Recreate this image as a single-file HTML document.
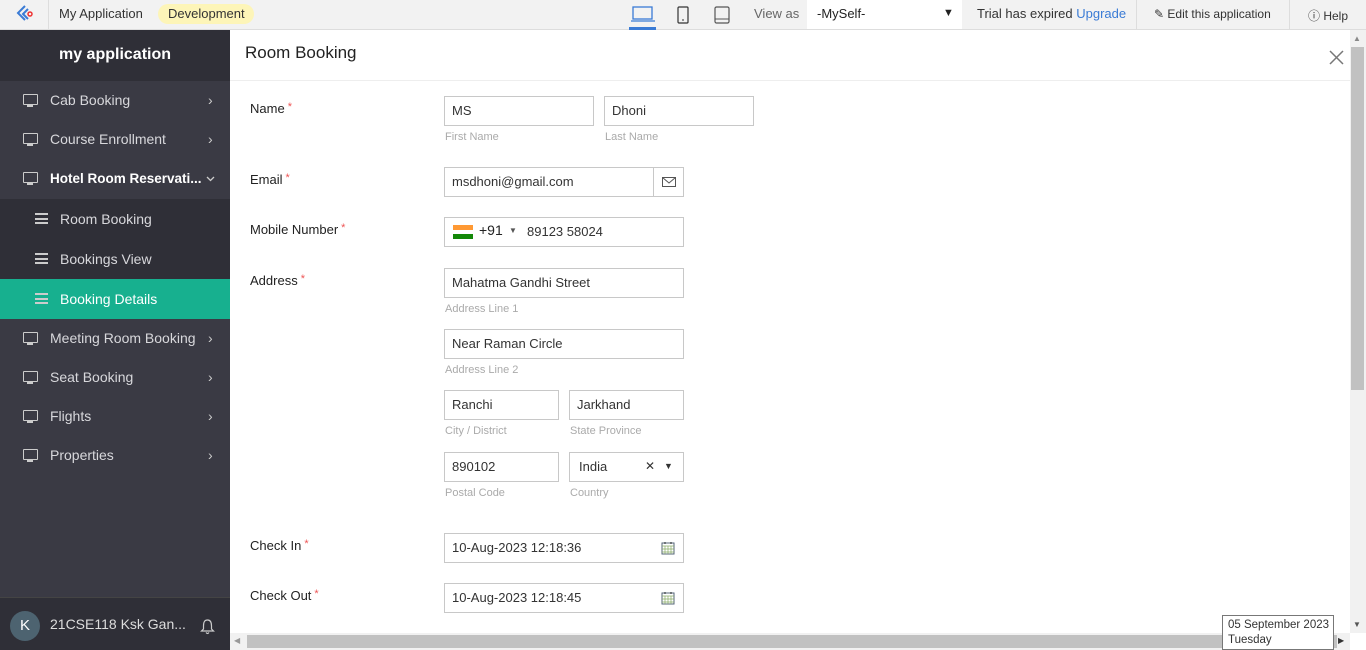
<!DOCTYPE html>
<html><head><meta charset="utf-8"><style>
*{box-sizing:border-box;margin:0;padding:0}
body{width:1366px;height:650px;overflow:hidden;font-family:"Liberation Sans",sans-serif;font-size:13px;color:#222;background:#fff;position:relative}
.a{position:absolute;white-space:nowrap}
.top{left:0;top:0;width:1366px;height:30px;background:#f2f2f2;border-bottom:1px solid #ddd}
.side{left:0;top:30px;width:230px;height:620px;background:#3a3a44}
.item{position:absolute;left:0;width:230px;height:39px;color:#d8d8dc;font-size:14px;line-height:39px;padding-left:50px;white-space:nowrap}
.item .ic{position:absolute;left:23px;top:13px;width:15px;height:11px;border:1.5px solid #ccc;border-radius:1px}
.item .ic:after{content:"";position:absolute;left:3px;top:10px;width:6px;height:2px;background:#ccc}
.item .ch{position:absolute;left:208px;top:0;font-size:14px;color:#ccc}
.sub{position:absolute;left:0;width:230px;height:40px;background:#2f2f37;color:#d8d8dc;font-size:14px;line-height:40px;padding-left:60px}
.sub .ln{position:absolute;left:35px;top:14px;width:13px;height:11px;border-top:2px solid #ccc;border-bottom:2px solid #ccc}
.sub .ln:after{content:"";position:absolute;left:0;top:2.5px;width:13px;height:2px;background:#ccc}
.lbl{position:absolute;left:250px;font-size:13px;color:#222}
.lbl b{color:#e55;font-weight:normal;font-size:11px;margin-left:3px;vertical-align:top}
.in{position:absolute;height:30px;border:1px solid #c8c8c8;padding-left:7px;line-height:27px;font-size:13px;color:#333;background:#fff;white-space:nowrap}
.hint{position:absolute;font-size:11px;color:#aaa}
</style></head><body>
<div class="a top"></div>
<svg class="a" style="left:14px;top:3px" width="22" height="22" viewBox="0 0 22 22"><path d="M11 3 L4 10 L11 17" fill="none" stroke="#3a7bd5" stroke-width="2"/><path d="M14 6 L9 11 L14 16" fill="none" stroke="#3a7bd5" stroke-width="2"/><circle cx="16" cy="11" r="2" fill="none" stroke="#e33" stroke-width="1.5"/></svg>
<div class="a" style="left:48px;top:0;width:1px;height:30px;background:#ddd"></div>
<div class="a" style="left:59px;top:6px;font-size:13px;color:#333">My Application</div>
<div class="a" style="left:158px;top:4px;width:96px;height:20px;background:#fdf5b8;border-radius:10px;font-size:13px;line-height:19px;padding-left:10px;color:#333">Development</div>
<svg class="a" style="left:630px;top:6px" width="26" height="18"><rect x="3" y="1" width="19" height="12" fill="none" stroke="#3a7bd5" stroke-width="1.3"/><path d="M1 15 H25" stroke="#3a7bd5" stroke-width="1.3"/></svg>
<div class="a" style="left:629px;top:27px;width:27px;height:3px;background:#3a7bd5"></div>
<svg class="a" style="left:676px;top:6px" width="14" height="18"><rect x="2" y="1" width="10" height="16" rx="1" fill="none" stroke="#333" stroke-width="1.2"/><path d="M6 14 H8" stroke="#333"/></svg>
<svg class="a" style="left:714px;top:6px" width="16" height="18"><rect x="1" y="1" width="14" height="16" rx="1.5" fill="none" stroke="#555" stroke-width="1.2"/><path d="M1 13 H15" stroke="#555"/></svg>
<div class="a" style="left:754px;top:6px;color:#666">View as</div>
<div class="a" style="left:807px;top:0;width:155px;height:29px;background:#fff;padding-left:10px;line-height:27px;font-size:13px;color:#222">-MySelf-<span style="position:absolute;left:136px;font-size:11px">▼</span></div>
<div class="a" style="left:977px;top:6px;color:#333">Trial has expired <span style="color:#3a7bd5">Upgrade</span></div>
<div class="a" style="left:1136px;top:0;width:1px;height:29px;background:#ddd"></div>
<div class="a" style="left:1154px;top:7px;font-size:12px;color:#333">✎ Edit this application</div>
<div class="a" style="left:1289px;top:0;width:1px;height:29px;background:#ddd"></div>
<div class="a" style="left:1308px;top:7px;font-size:12px;color:#333">ⓘ Help</div>

<div class="a side"></div>
<div class="a" style="left:0;top:30px;width:230px;height:51px;background:#2f2f37;color:#fff;font-size:16px;font-weight:bold;text-align:center;line-height:50px">my application</div>
<div class="item" style="top:81px"><span class="ic"></span>Cab Booking<span class="ch">›</span></div>
<div class="item" style="top:120px"><span class="ic"></span>Course Enrollment<span class="ch">›</span></div>
<div class="item" style="top:159px;height:40px;color:#fff;font-weight:bold;font-size:13.5px"><span class="ic"></span>Hotel Room Reservati...<svg style="position:absolute;left:206px;top:17px" width="9" height="6"><path d="M1 1 L4.5 4.5 L8 1" fill="none" stroke="#ccc" stroke-width="1.3"/></svg></div>
<div class="sub" style="top:199px"><span class="ln"></span>Room Booking</div>
<div class="sub" style="top:239px"><span class="ln"></span>Bookings View</div>
<div class="sub" style="top:279px;background:#17b08f;color:#fff"><span class="ln"></span>Booking Details</div>
<div class="item" style="top:319px"><span class="ic"></span>Meeting Room Booking<span class="ch">›</span></div>
<div class="item" style="top:358px"><span class="ic"></span>Seat Booking<span class="ch">›</span></div>
<div class="item" style="top:397px"><span class="ic"></span>Flights<span class="ch">›</span></div>
<div class="item" style="top:436px"><span class="ic"></span>Properties<span class="ch">›</span></div>
<div class="a" style="left:0;top:597px;width:230px;height:53px;background:#2f2f37;border-top:1px solid #444"></div>
<div class="a" style="left:10px;top:611px;width:30px;height:30px;border-radius:50%;background:#4d6370;color:#fff;font-size:15px;text-align:center;line-height:30px">K</div>
<div class="a" style="left:50px;top:616px;color:#ddd;font-size:14px">21CSE118 Ksk Gan...</div>
<svg class="a" style="left:200px;top:618px" width="15" height="17"><path d="M7.5 2 C4 2 3.5 5 3.5 8 V11 L1.5 13 H13.5 L11.5 11 V8 C11.5 5 11 2 7.5 2 Z M6 14.5 Q7.5 16.5 9 14.5" fill="none" stroke="#ccc" stroke-width="1.2"/></svg>

<div class="a" style="left:245px;top:43px;font-size:17px;color:#222">Room Booking</div>
<div class="a" style="left:230px;top:80px;width:1120px;height:1px;background:#eee"></div>
<svg class="a" style="left:1329px;top:50px" width="15" height="15"><path d="M1 1 L14 14 M14 1 L1 14" stroke="#777" stroke-width="1.5"/></svg>
<div class="a" style="left:1350px;top:30px;width:16px;height:603px;background:#f1f1f1"></div>
<div class="a" style="left:1351px;top:47px;width:13px;height:343px;background:#c1c1c1"></div>
<div class="a" style="left:1353px;top:34px;font-size:8px;color:#888">▲</div>
<div class="a" style="left:1353px;top:620px;font-size:8px;color:#555">▼</div>
<div class="a" style="left:230px;top:633px;width:1120px;height:17px;background:#f1f1f1"></div>
<div class="a" style="left:247px;top:635px;width:1090px;height:13px;background:#c1c1c1"></div>
<div class="a" style="left:234px;top:636px;font-size:8px;color:#999">◀</div>
<div class="a" style="left:1338px;top:636px;font-size:8px;color:#333">▶</div>

<div class="lbl" style="top:101px">Name<b>*</b></div>
<div class="in" style="left:444px;top:96px;width:150px">MS</div>
<div class="in" style="left:604px;top:96px;width:150px">Dhoni</div>
<div class="hint" style="left:445px;top:131px">First Name</div>
<div class="hint" style="left:605px;top:131px">Last Name</div>

<div class="lbl" style="top:172px">Email<b>*</b></div>
<div class="in" style="left:444px;top:167px;width:240px">msdhoni@gmail.com</div>
<div class="a" style="left:653px;top:167px;width:1px;height:30px;background:#c8c8c8"></div>
<svg class="a" style="left:662px;top:176px" width="14" height="12"><rect x="0.5" y="1.5" width="13" height="9" fill="none" stroke="#555"/><path d="M0.5 1.5 L7 7 L13.5 1.5" fill="none" stroke="#555"/></svg>

<div class="lbl" style="top:222px">Mobile Number<b>*</b></div>
<div class="in" style="left:444px;top:217px;width:240px;padding-left:82px">89123 58024</div>
<div class="a" style="left:453px;top:225px;width:20px;height:5px;background:#f93"></div>
<div class="a" style="left:453px;top:230px;width:20px;height:4px;background:#fff"></div>
<div class="a" style="left:453px;top:234px;width:20px;height:5px;background:#138808"></div>
<div class="a" style="left:479px;top:222px;font-size:14px;color:#222">+91</div>
<div class="a" style="left:509px;top:226px;font-size:8px;color:#555">▼</div>

<div class="lbl" style="top:273px">Address<b>*</b></div>
<div class="in" style="left:444px;top:268px;width:240px">Mahatma Gandhi Street</div>
<div class="hint" style="left:445px;top:303px">Address Line 1</div>
<div class="in" style="left:444px;top:329px;width:240px">Near Raman Circle</div>
<div class="hint" style="left:445px;top:364px">Address Line 2</div>
<div class="in" style="left:444px;top:390px;width:115px">Ranchi</div>
<div class="in" style="left:569px;top:390px;width:115px">Jarkhand</div>
<div class="hint" style="left:445px;top:425px">City / District</div>
<div class="hint" style="left:570px;top:425px">State Province</div>
<div class="in" style="left:444px;top:452px;width:115px">890102</div>
<div class="in" style="left:569px;top:452px;width:115px;padding-left:9px">India<span style="position:absolute;left:75px;font-size:12px">✕</span><span style="position:absolute;left:94px;font-size:9px">▼</span></div>
<div class="hint" style="left:445px;top:487px">Postal Code</div>
<div class="hint" style="left:570px;top:487px">Country</div>

<div class="lbl" style="top:538px">Check In<b>*</b></div>
<div class="in" style="left:444px;top:533px;width:240px">10-Aug-2023 12:18:36</div>
<div class="lbl" style="top:588px">Check Out<b>*</b></div>
<div class="in" style="left:444px;top:583px;width:240px">10-Aug-2023 12:18:45</div>
<svg class="a" style="left:661px;top:541px" width="14" height="14"><rect x="1" y="2" width="12" height="11" fill="#fff" stroke="#567"/><path d="M1 5 H13 M1 8 H13 M1 11 H13 M4 5 V13 M7 5 V13 M10 5 V13" stroke="#8a6" stroke-width=".7"/><path d="M4 1 V3 M10 1 V3" stroke="#333"/></svg>
<svg class="a" style="left:661px;top:591px" width="14" height="14"><rect x="1" y="2" width="12" height="11" fill="#fff" stroke="#567"/><path d="M1 5 H13 M1 8 H13 M1 11 H13 M4 5 V13 M7 5 V13 M10 5 V13" stroke="#8a6" stroke-width=".7"/><path d="M4 1 V3 M10 1 V3" stroke="#333"/></svg>

<div class="a" style="left:1222px;top:615px;width:112px;height:35px;background:#fff;border:1px solid #777;font-size:11.5px;line-height:15px;padding:2px 5px;color:#333;overflow:hidden">05 September 2023<br>Tuesday</div>
</body></html>
